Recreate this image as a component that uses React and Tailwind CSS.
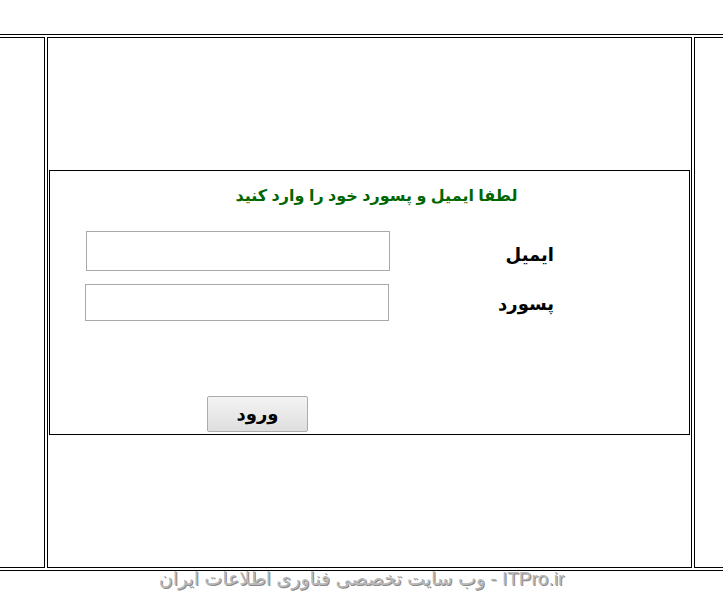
export default function App() {
  const font = { fontFamily: '"Liberation Sans", "DejaVu Sans", sans-serif' };

  return (
    <div className="min-h-[608px] bg-white pt-[34px]" style={font}>
      {/* outer table */}
      <div className="flex h-[537px] gap-[2px] border-y border-black py-[2px]">
        <div className="w-[45px] shrink-0 border-y border-r border-black" />

        <div className="flex w-[645px] shrink-0 items-center border border-black px-px">
          {/* login box */}
          <div dir="rtl" className="h-[265px] w-full border border-black">
            <div className="mt-[14px] pl-[14px] text-center text-[16px] font-bold leading-[22px] text-[#006600]">
              لطفا ایمیل و پسورد خود را وارد کنید
            </div>

            <div className="mt-[24px] flex h-[40px] items-center">
              <div className="flex-1 pr-[135px] pt-[8px] text-right text-[18px] font-bold text-black">ایمیل</div>
              <input
                dir="ltr"
                className="ml-[36px] h-[40px] w-[304px] border border-[#a9a9a9] bg-white outline-none"
              />
            </div>

            <div className="mt-[13px] flex h-[37px] items-center">
              <div className="flex-1 pr-[135px] pt-[4px] text-right text-[18px] font-bold text-black">پسورد</div>
              <input
                dir="ltr"
                className="ml-[35px] h-[37px] w-[304px] border border-[#a9a9a9] bg-white outline-none"
              />
            </div>

            <div dir="ltr" className="mt-[75px] pl-[157px]">
              <button className="h-[36px] w-[101px] rounded-[2px] border border-[#acacac] bg-gradient-to-b from-[#f4f4f4] to-[#dedede] text-[18px] font-bold text-black">
                ورود
              </button>
            </div>
          </div>
        </div>

        <div className="flex-1 border-y border-l border-black" />
      </div>

      {/* footer */}
      <div
        dir="rtl"
        className="text-center text-[19px] leading-[16px] text-[#b8b8b8] [text-shadow:1px_1px_0_#8a8a8a]"
      >
        ITPro.ir - وب سایت تخصصی فناوری اطلاعات ایران
      </div>
    </div>
  );
}
